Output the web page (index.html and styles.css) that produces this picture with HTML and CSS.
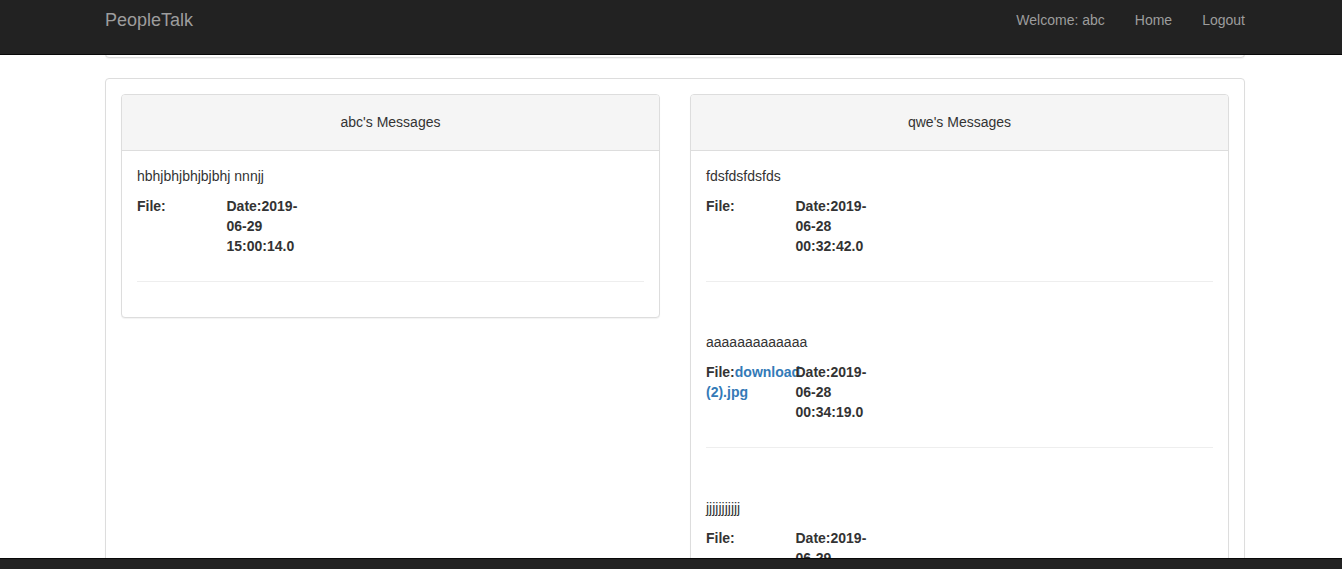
FILE: index.html
```html
<!DOCTYPE html>
<html lang="en">
<head>
<meta charset="utf-8">
<title>PeopleTalk</title>
<link rel="stylesheet" href="styles.css">
</head>
<body>
<nav class="navbar">
  <div class="container nav-inner">
    <a class="brand" href="#">PeopleTalk</a>
    <ul class="nav-right">
      <li><a href="#">Welcome: abc</a></li>
      <li><a href="#">Home</a></li>
      <li><a href="#">Logout</a></li>
    </ul>
  </div>
</nav>

<div class="container">
  <div class="panel top-panel"></div>
  <div class="panel outer">
    <div class="outer-body">
      <div class="row">
        <div class="col">
          <div class="panel inner">
            <div class="panel-heading">abc's Messages</div>
            <div class="panel-body">
              <div class="msg">
                <p class="msg-text">hbhjbhjbhjbjbhj nnnjj</p>
                <div class="meta">
                  <div class="cell">File:</div>
                  <div class="cell">Date:2019-<wbr>06-29 15:00:14.0</div>
                </div>
                <hr class="divider">
              </div>
            </div>
          </div>
        </div>
        <div class="col">
          <div class="panel inner">
            <div class="panel-heading">qwe's Messages</div>
            <div class="panel-body">
              <div class="msg">
                <p class="msg-text">fdsfdsfdsfds</p>
                <div class="meta">
                  <div class="cell">File:</div>
                  <div class="cell">Date:2019-<wbr>06-28 00:32:42.0</div>
                </div>
                <hr class="divider">
              </div>
              <div class="msg">
                <p class="msg-text">aaaaaaaaaaaaa</p>
                <div class="meta">
                  <div class="cell">File:<a href="#">download (2).jpg</a></div>
                  <div class="cell">Date:2019-<wbr>06-28 00:34:19.0</div>
                </div>
                <hr class="divider">
              </div>
              <div class="msg">
                <p class="msg-text">jjjjjjjjjjj</p>
                <div class="meta">
                  <div class="cell">File:</div>
                  <div class="cell">Date:2019-<wbr>06-29 10:12:31.0</div>
                </div>
                <hr class="divider">
              </div>
            </div>
          </div>
        </div>
      </div>
    </div>
  </div>
</div>

<footer class="footer"></footer>
</body>
</html>
```

FILE: styles.css
```css
html {
  scrollbar-width: none;
}
::-webkit-scrollbar {
  display: none;
}
* {
  box-sizing: border-box;
}
body {
  margin: 0;
  font-family: "Liberation Sans", Arial, Helvetica, sans-serif;
  font-size: 14px;
  line-height: 20px;
  color: #333;
  background: #fff;
}
a {
  color: #337ab7;
  text-decoration: none;
}
.container {
  width: 1170px;
  margin-left: 90px;
  padding: 0 15px;
}

/* navbar */
.navbar {
  position: fixed;
  top: 0;
  left: 0;
  right: 0;
  height: 55px;
  background: #222;
  border-bottom: 1px solid #080808;
  z-index: 10;
}
.nav-inner {
  display: flex;
  justify-content: space-between;
  align-items: flex-start;
}
.brand {
  margin-left: -15px;
  padding: 10px 15px;
  font-size: 18px;
  line-height: 20px;
  color: #9d9d9d;
}
.nav-right {
  display: flex;
  list-style: none;
  margin: 0 -15px 0 0;
  padding: 0;
}
.nav-right a {
  display: block;
  padding: 10px 15px;
  color: #9d9d9d;
  font-size: 14px;
  line-height: 20px;
}

/* panels */
.panel {
  background: #fff;
  border: 1px solid #ddd;
  border-radius: 4px;
  box-shadow: 0 1px 1px rgba(0, 0, 0, 0.05);
}
.top-panel {
  height: 58px;
  margin-bottom: 20px;
}
.outer {
  height: 600px;
}
.outer-body {
  padding: 15px;
}
.row {
  display: flex;
  margin: 0 -15px;
}
.col {
  width: 50%;
  padding: 0 15px;
}
.inner {
  margin-bottom: 20px;
}
.panel-heading {
  background: #f5f5f5;
  border-bottom: 1px solid #ddd;
  border-radius: 3px 3px 0 0;
  padding: 17px 15px 18px;
  text-align: center;
}
.panel-body {
  padding: 15px;
}
.msg + .msg {
  padding-top: 30px;
}
.msg-text {
  margin: 0 0 10px;
}
.meta {
  display: flex;
  margin: 0 -15px;
  font-weight: bold;
}
.cell {
  width: 16.6667%;
  padding: 0 15px;
  flex: none;
}
.divider {
  margin: 25px 0 20px;
  border: 0;
  border-top: 1px solid #eee;
  height: 0;
}

/* footer */
.footer {
  position: fixed;
  left: 0;
  right: 0;
  bottom: 0;
  height: 11px;
  background: #222;
  border-top: 1px solid #080808;
  z-index: 10;
}
```
